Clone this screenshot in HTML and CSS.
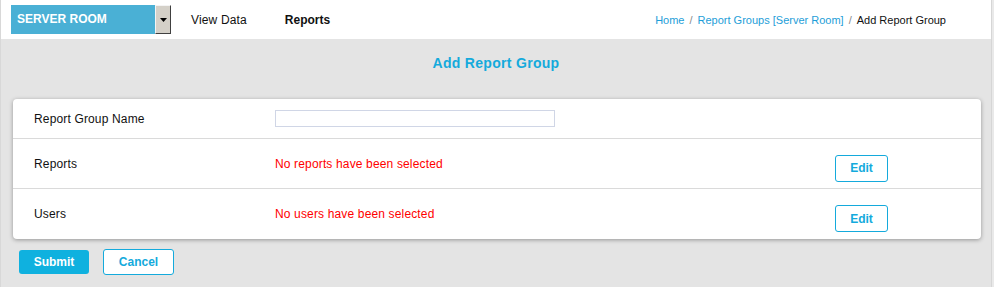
FILE: index.html
```html
<!DOCTYPE html>
<html>
<head>
<meta charset="utf-8">
<link rel="stylesheet" href="styles.css">
</head>
<body>
<div class="page">
  <div class="main">
    <header class="topbar">
      <div class="site-select">
        <span class="site-name">SERVER ROOM</span>
        <span class="site-btn"><svg width="7" height="4" viewBox="0 0 7 4"><path d="M0 0h7L3.5 4z" fill="#000"/></svg></span>
      </div>
      <nav class="nav">
        <a class="nav-item">View Data</a>
        <a class="nav-item active">Reports</a>
      </nav>
      <div class="crumbs">
        <a class="crumb-link">Home</a><span class="sep">/</span><a class="crumb-link">Report Groups [Server Room]</a><span class="sep">/</span><span class="crumb-cur">Add Report Group</span>
      </div>
    </header>
    <h1 class="title">Add Report Group</h1>
    <div class="card">
      <div class="row row-first">
        <div class="label">Report Group Name</div>
        <div class="value"><input class="text-input" type="text"></div>
      </div>
      <div class="row">
        <div class="label">Reports</div>
        <div class="value empty">No reports have been selected</div>
        <button class="btn-edit">Edit</button>
      </div>
      <div class="row row-last">
        <div class="label">Users</div>
        <div class="value empty">No users have been selected</div>
        <button class="btn-edit">Edit</button>
      </div>
    </div>
    <div class="actions">
      <button class="btn-submit">Submit</button>
      <button class="btn-cancel">Cancel</button>
    </div>
  </div>
  <div class="scrollstrip"></div>
</div>
</body>
</html>
```

FILE: styles.css
```css
* { box-sizing: border-box; }
html, body { margin: 0; padding: 0; }
body {
  font-family: "Liberation Sans", Arial, sans-serif;
  font-size: 12px;
  letter-spacing: 0.15px;
  color: #111;
  background: #e4e4e4;
  height: 287px;
  overflow: hidden;
}
.page { display: flex; height: 287px; }
.main { flex: 1; border-left: 1px solid #d8d8d8; }
.scrollstrip { width: 3px; background: #e9e9e9; border-left: 1px solid #d6d6d6; }

.topbar {
  height: 39px;
  background: #fff;
  display: flex;
  align-items: center;
  padding-left: 10px;
}
.site-select { display: flex; height: 29px; }
.site-name {
  width: 144px;
  background: #4ab0d5;
  color: #fff;
  font-weight: bold;
  font-size: 12px;
  line-height: 29px;
  padding-left: 6px;
  letter-spacing: 0;
}
.site-btn {
  width: 16px;
  background: #d4d0c8;
  border-left: 1px solid #f4f4f4;
  border-top: 1px solid #f4f4f4;
  border-right: 1px solid #404040;
  border-bottom: 1px solid #404040;
  display: flex;
  align-items: center;
  justify-content: center;
}
.nav { display: flex; margin-left: 20px; }
.nav-item { color: #111; font-size: 12px; margin-right: 38px; }
.nav-item.active { font-weight: bold; letter-spacing: 0; }
.crumbs {
  margin-left: auto;
  margin-right: 45px;
  font-size: 11px;
  letter-spacing: 0;
}
.crumb-link { color: #1e9ed8; }
.sep { color: #8a8a8a; margin: 0 5px; }
.crumb-cur { color: #111; }

.title {
  margin: 16px 0 0;
  height: 17px;
  line-height: 17px;
  text-align: center;
  font-size: 14px;
  letter-spacing: 0.3px;
  font-weight: bold;
  color: #14aadc;
}
.card {
  margin: 27px 10px 0 12px;
  background: #fff;
  border-radius: 4px;
  box-shadow: 0 1px 4px rgba(0,0,0,0.35);
}
.row {
  display: flex;
  align-items: center;
  height: 50px;
  padding-left: 21px;
  border-bottom: 1px solid #dadada;
}
.row-first { height: 40px; }
.row-last { border-bottom: none; }
.label { width: 241px; font-size: 12px; }
.value { flex: 1; font-size: 12px; }
.empty { color: #f00; }
.text-input {
  display: block;
  width: 280px;
  height: 17px;
  border: 1px solid #d0d6e6;
  margin: 0;
  padding: 0;
}
.btn-edit {
  width: 53px;
  height: 27px;
  margin: 9px 93px 0 0;
  background: #fff;
  border: 1px solid #14aadc;
  border-radius: 3px;
  color: #14aadc;
  font-family: inherit;
  font-size: 12px;
  font-weight: bold;
  padding: 0;
}
.actions {
  display: flex;
  align-items: center;
  padding: 10px 0 0 18px;
}
.btn-submit {
  width: 70px;
  height: 24px;
  background: #0fb1df;
  border: none;
  border-radius: 3px;
  color: #fff;
  font-family: inherit;
  font-size: 12px;
  font-weight: bold;
  padding: 0;
}
.btn-cancel {
  width: 71px;
  height: 26px;
  margin-left: 14px;
  background: #fff;
  border: 1px solid #14aadc;
  border-radius: 3px;
  color: #14aadc;
  font-family: inherit;
  font-size: 12px;
  font-weight: bold;
  padding: 0;
}
```
